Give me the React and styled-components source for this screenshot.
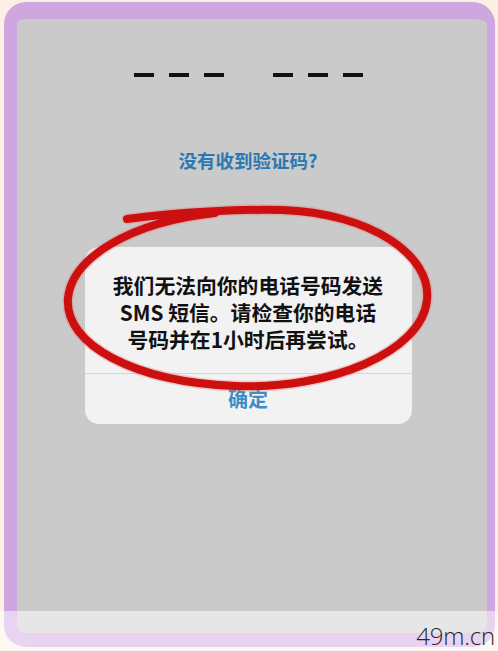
import React from "react";
import styled, { createGlobalStyle } from "styled-components";

const GlobalStyle = createGlobalStyle`
  html, body {
    margin: 0;
    padding: 0;
    background: #fcefe4;
  }
  * { box-sizing: border-box; }
`;

const Page = styled.div`
  position: relative;
  width: 498px;
  height: 651px;
  overflow: hidden;
  padding: 2px 3px 0 4px;
`;

const Frame = styled.div`
  width: 491px;
  height: 645px;
  border-style: solid;
  border-color: #cfa6df;
  border-width: 17px 8px 14px 13px;
  border-radius: 22px;
  background: #cacaca;
  overflow: hidden;
`;

const Screen = styled.div`
  display: flex;
  flex-direction: column;
  align-items: center;
  height: 100%;
  padding: 54px 8px 0 0;
  font-family: "Noto Sans CJK SC", "Noto Sans", sans-serif;
`;

const CodeRow = styled.div`
  display: flex;
  gap: 49px;
  height: 4px;
`;

const DashGroup = styled.div`
  display: flex;
  gap: 15px;
`;

const Dash = styled.span`
  display: block;
  width: 20px;
  height: 4px;
  background: #111;
`;

const ResendLink = styled.div`
  margin-top: 72px;
  font-size: 18.5px;
  line-height: 22px;
  font-weight: 600;
  color: #2c78b2;
`;

const Dialog = styled.div`
  margin-top: 76px;
  width: 327px;
  background: #f2f2f2;
  border-radius: 14px;
  display: flex;
  flex-direction: column;
`;

const Message = styled.p`
  margin: 0;
  padding: 25px 10px 20px;
  text-align: center;
  font-size: 20.8px;
  line-height: 27px;
  font-weight: 600;
  color: #111;
`;

const DialogButton = styled.div`
  border-top: 1px solid #d6d6d6;
  height: 51px;
  display: flex;
  align-items: center;
  justify-content: center;
  padding-bottom: 2px;
  font-size: 20px;
  font-weight: 600;
  color: #3d8ec6;
`;

const Scribble = styled.svg`
  position: absolute;
  top: 0;
  left: 0;
  pointer-events: none;
`;

const BottomFade = styled.div`
  position: absolute;
  left: 0;
  right: 0;
  top: 611px;
  height: 40px;
  background: rgba(255, 255, 255, 0.52);
  display: flex;
  justify-content: flex-end;
  align-items: flex-end;
  padding: 0 3px 1px 0;
`;

const Watermark = styled.span`
  font-family: "Open Sans", "Liberation Sans", sans-serif;
  font-weight: 300;
  font-size: 24px;
  line-height: 28px;
  color: #262626;
  letter-spacing: -0.2px;
`;

const RING =
  "M 127 219 C 180 212, 240 209, 282 210 C 370 213, 432 255, 427 300 C 422 352, 330 390, 235 386 C 135 382, 64 345, 68 298 C 72 258, 130 222, 215 213";

function DashGroupOf({ count }) {
  return (
    <DashGroup>
      {Array.from({ length: count }).map((_, i) => (
        <Dash key={i} />
      ))}
    </DashGroup>
  );
}

export default function App() {
  return (
    <Page>
      <GlobalStyle />
      <Frame>
        <Screen>
          <CodeRow>
            <DashGroupOf count={3} />
            <DashGroupOf count={3} />
          </CodeRow>
          <ResendLink>没有收到验证码?</ResendLink>
          <Dialog>
            <Message>
              我们无法向你的电话号码发送
              <br />
              SMS 短信。请检查你的电话
              <br />
              号码并在1小时后再尝试。
            </Message>
            <DialogButton>确定</DialogButton>
          </Dialog>
        </Screen>
      </Frame>

      <Scribble width="498" height="651" viewBox="0 0 498 651">
        <path d={RING} fill="none" stroke="rgba(235,120,120,0.35)" strokeWidth="11" strokeLinecap="round" />
        <path d={RING} fill="none" stroke="#cc1010" strokeWidth="8" strokeLinecap="round" />
      </Scribble>

      <BottomFade>
        <Watermark>49m.cn</Watermark>
      </BottomFade>
    </Page>
  );
}
